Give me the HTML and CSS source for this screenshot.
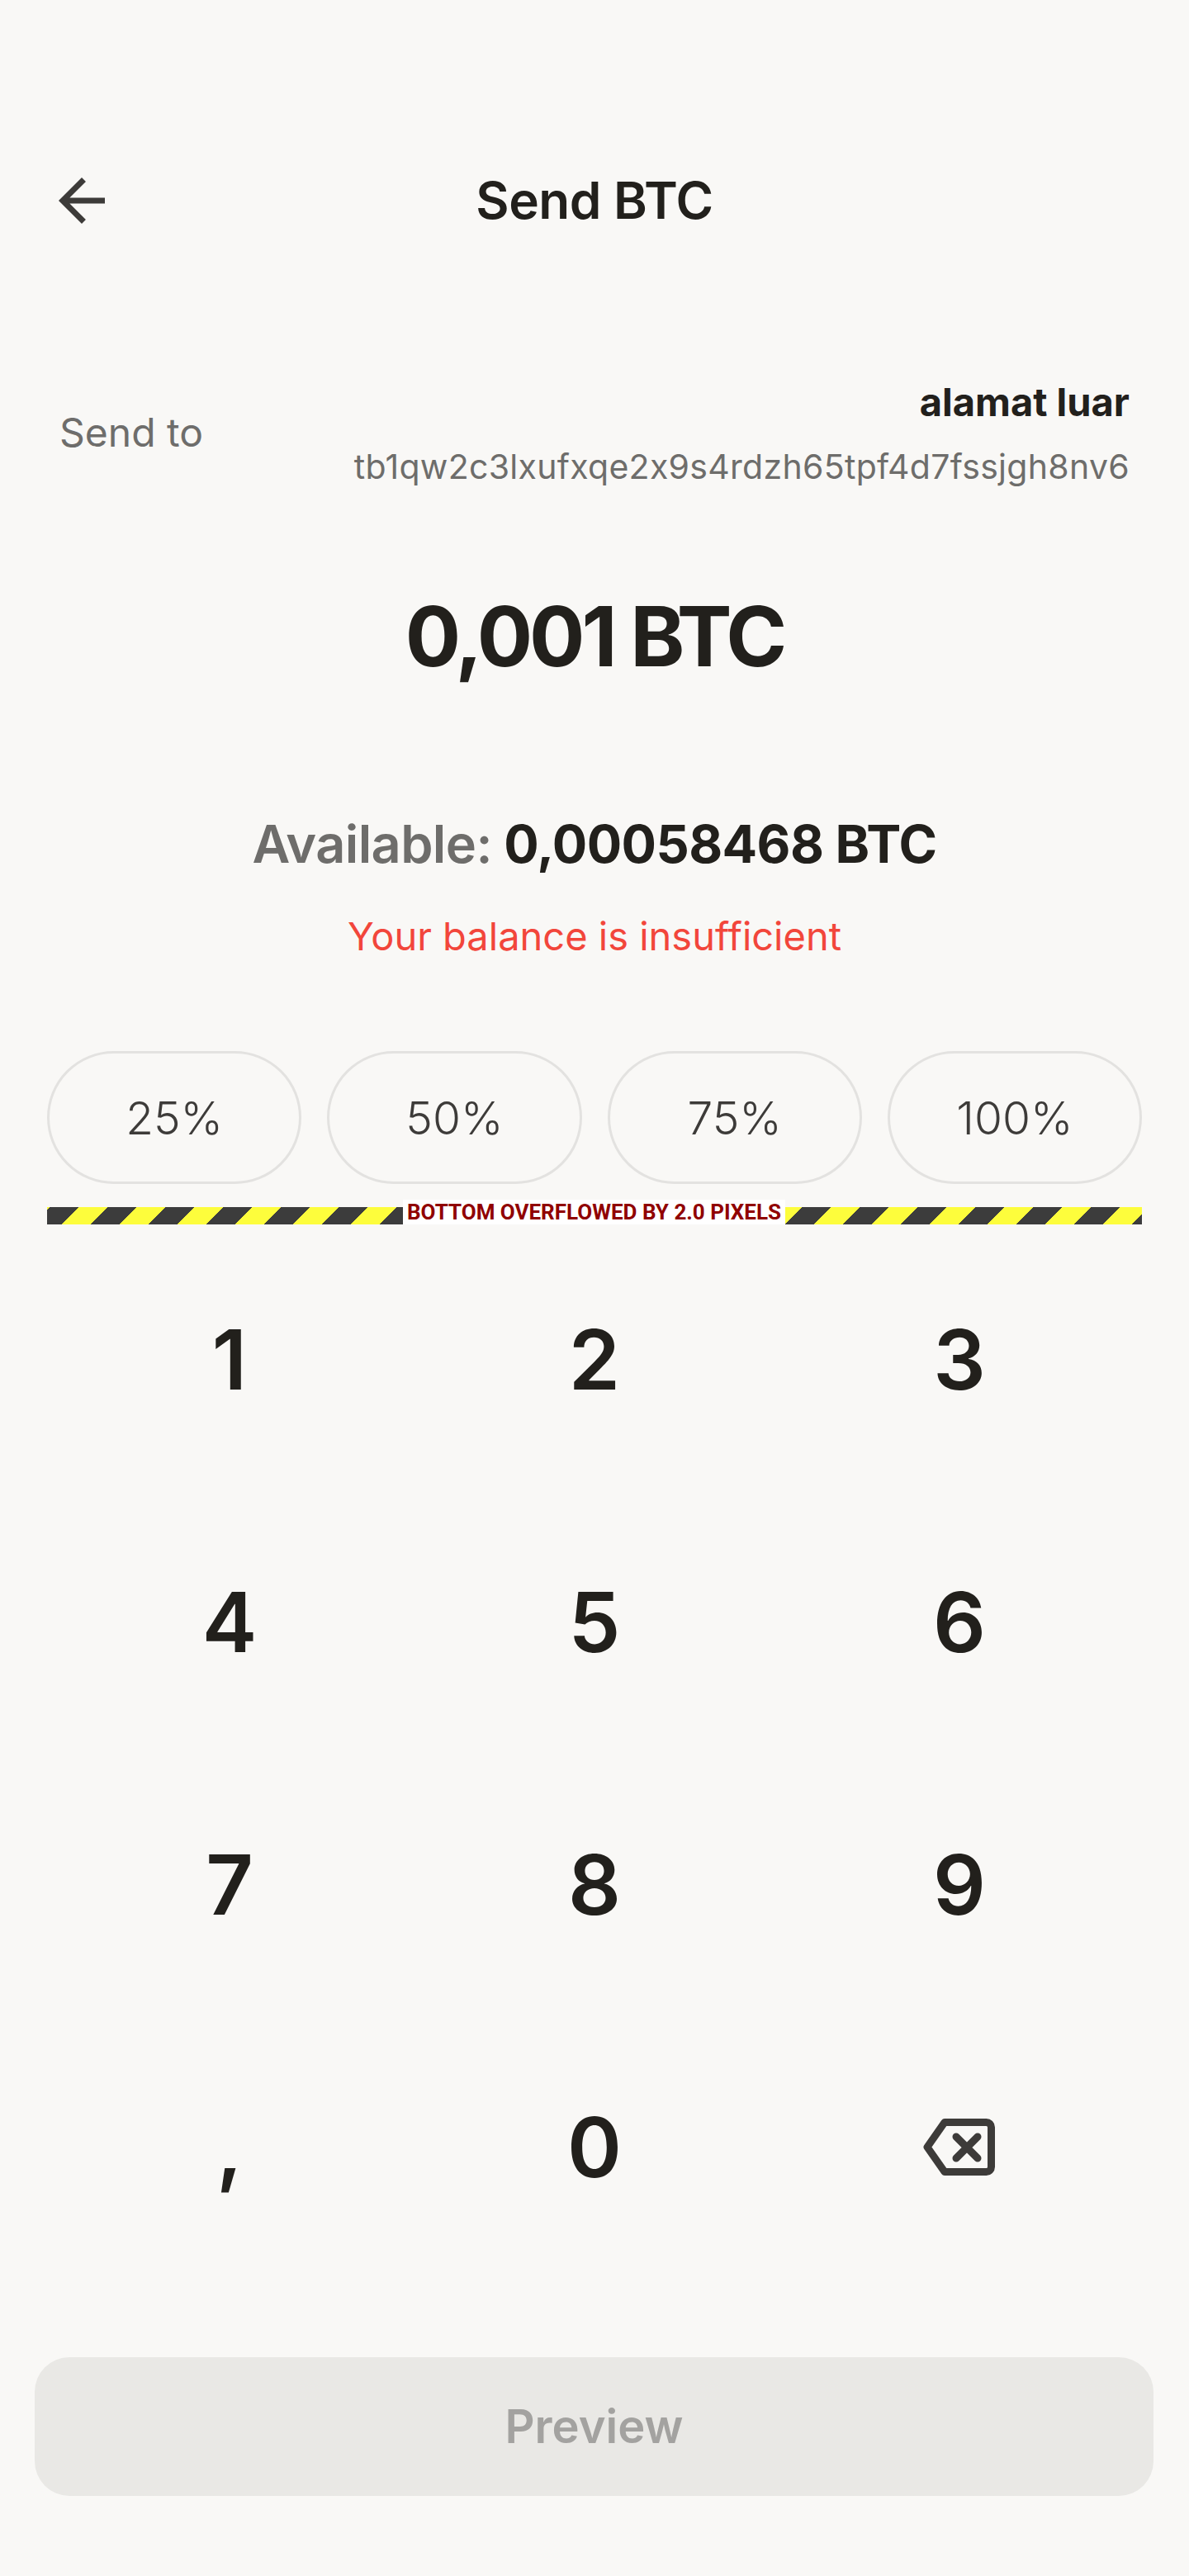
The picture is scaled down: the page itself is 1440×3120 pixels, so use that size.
FILE: index.html
```html
<!DOCTYPE html>
<html lang="en">
<head>
<meta charset="utf-8">
<title>Send BTC</title>
<link rel="stylesheet" href="styles.css">
</head>
<body>
<div class="screen">
  <header class="topbar">
    <button class="back" aria-label="Back">
      <svg viewBox="0 0 24 24" width="84" height="84"><path d="M20 11H7.83l5.59-5.59L12 4l-8 8 8 8 1.41-1.41L7.83 13H20v-2z"/></svg>
    </button>
    <h1 class="title">Send BTC</h1>
    <span class="spacer"></span>
  </header>

  <section class="recipient">
    <span class="send-label">Send to</span>
    <div class="dest">
      <span class="dest-name">alamat luar</span>
      <span class="dest-addr">tb1qw2c3lxufxqe2x9s4rdzh65tpf4d7fssjgh8nv6</span>
    </div>
  </section>

  <div class="amount">0,001 BTC</div>

  <div class="available"><span class="avail-label">Available:</span> <span class="avail-value">0,00058468 BTC</span></div>

  <div class="error">Your balance is insufficient</div>

  <div class="percents">
    <button class="pct">25%</button>
    <button class="pct">50%</button>
    <button class="pct">75%</button>
    <button class="pct">100%</button>
  </div>

  <div class="overflow-bar">
    <span class="overflow-label">BOTTOM OVERFLOWED BY 2.0 PIXELS</span>
  </div>

  <div class="keypad">
    <button class="key">1</button>
    <button class="key">2</button>
    <button class="key">3</button>
    <button class="key">4</button>
    <button class="key">5</button>
    <button class="key">6</button>
    <button class="key">7</button>
    <button class="key">8</button>
    <button class="key">9</button>
    <button class="key key-comma">,</button>
    <button class="key">0</button>
    <button class="key" aria-label="Delete">
      <svg class="bksp" viewBox="0 0 88 72" width="88" height="72">
        <path d="M26 5.5H76.5a6 6 0 0 1 6 6V59.5a6 6 0 0 1-6 6H26L5 35.5Z" fill="none" stroke="#3d3b39" stroke-width="9" stroke-linejoin="round"/>
        <path d="M40 23L66 49M66 23L40 49" fill="none" stroke="#3d3b39" stroke-width="9" stroke-linecap="round"/>
      </svg>
    </button>
  </div>

  <button class="preview">Preview</button>
</div>
</body>
</html>
```

FILE: styles.css
```css
* { box-sizing: border-box; }

html, body {
  margin: 0;
  padding: 0;
  background: #f9f8f6;
}

body {
  font-family: "Inter", "Noto Sans", sans-serif;
  font-feature-settings: "calt" 0;
  color: #22201c;
}

.screen {
  width: 1440px;
  min-height: 3120px;
  display: flex;
  flex-direction: column;
}

button {
  font-family: inherit;
  font-feature-settings: inherit;
  border: none;
  background: none;
  padding: 0;
  margin: 0;
  color: inherit;
}

.topbar {
  margin-top: 201px;
  height: 84px;
  padding: 0 57px;
  display: grid;
  grid-template-columns: 84px 1fr 84px;
  align-items: center;
}

.back {
  width: 84px;
  height: 84px;
  display: flex;
}

.back svg { fill: #3d3b39; }

.title {
  margin: 0;
  text-align: center;
  font-size: 62px;
  line-height: 62px;
  font-weight: 600;
  letter-spacing: -0.5px;
  color: #22201c;
}

.recipient {
  margin-top: 178px;
  padding: 0 72px;
  display: flex;
  justify-content: space-between;
  align-items: center;
}

.send-label {
  font-size: 48px;
  line-height: 48px;
  color: #6e6d6b;
}

.dest {
  display: flex;
  flex-direction: column;
  align-items: flex-end;
  gap: 35px;
}

.dest-name {
  font-size: 47px;
  line-height: 47px;
  font-weight: 700;
  color: #22201c;
}

.dest-addr {
  font-size: 41px;
  line-height: 40px;
  letter-spacing: 0.3px;
  color: #6e6d6b;
}

.amount {
  margin-top: 136px;
  text-align: center;
  font-size: 100px;
  line-height: 100px;
  font-weight: 700;
  letter-spacing: -4px;
  color: #22201c;
}

.available {
  margin-top: 170px;
  text-align: center;
  font-size: 63px;
  line-height: 63px;
  font-weight: 700;
  letter-spacing: -0.6px;
}

.avail-label {
  color: #6e6d6b;
  font-weight: 600;
}

.avail-value { color: #22201c; }

.error {
  margin-top: 56px;
  text-align: center;
  font-size: 47px;
  line-height: 48px;
  color: #f2463b;
}

.percents {
  margin-top: 115px;
  padding: 0 57px;
  display: grid;
  grid-template-columns: repeat(4, 1fr);
  gap: 31px;
}

.pct {
  height: 161px;
  border: 3px solid #e3e2e0;
  border-radius: 81px;
  font-size: 55px;
  font-weight: 300;
  color: #3d3b39;
  display: flex;
  align-items: center;
  justify-content: center;
}

.overflow-bar {
  position: relative;
  margin: 28px 57px 0;
  height: 21px;
  background: repeating-linear-gradient(135deg,
    #3c3c3c 2.8px, #3c3c3c 27.55px,
    #fdfd3c 27.55px, #fdfd3c 52.3px);
}

.overflow-label {
  position: absolute;
  left: 431px;
  top: -9px;
  width: 463px;
  height: 30px;
  background: #ffffff;
  color: #900000;
  font-family: "Roboto", "Liberation Sans", sans-serif;
  font-weight: 700;
  font-size: 26px;
  line-height: 30px;
  text-align: center;
  white-space: nowrap;
}

.keypad {
  margin-top: 5px;
  padding: 0 57px;
  display: grid;
  grid-template-columns: repeat(3, 1fr);
  grid-auto-rows: 318px;
}

.key {
  display: flex;
  align-items: center;
  justify-content: center;
  font-size: 100px;
  line-height: 100px;
  font-weight: 600;
  color: #22201c;
}

.bksp { display: block; }

.preview {
  margin: 95px 43px 0 42px;
  height: 168px;
  border-radius: 42px;
  background: #e9e8e5;
  color: #a3a2a0;
  font-size: 56px;
  font-weight: 600;
  display: flex;
  align-items: center;
  justify-content: center;
}
```
